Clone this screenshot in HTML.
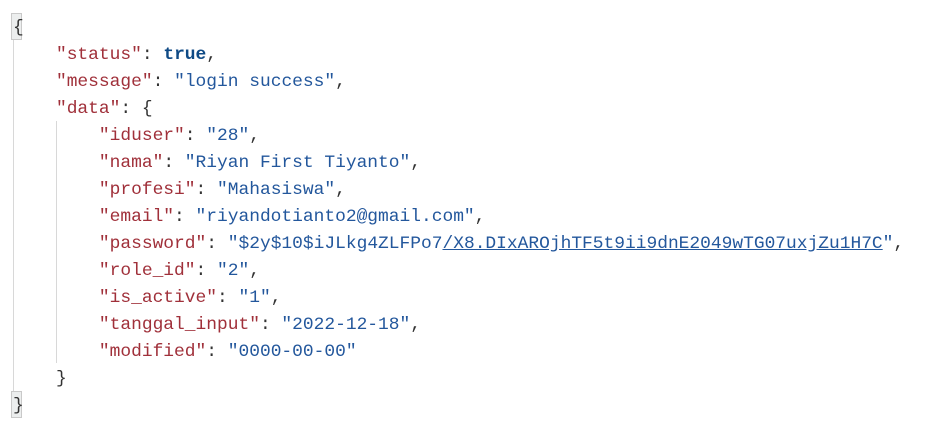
<!DOCTYPE html>
<html><head><style>
html,body{margin:0;padding:0;background:#fff;width:942px;height:436px;overflow:hidden}
.c{position:absolute;left:13px;top:15px;font-family:"Liberation Mono",monospace;font-size:17.9px;line-height:27px;color:#333;white-space:pre}
.k{color:#a0303a}
.s{color:#23579c}
.b{color:#0f4a85;font-weight:bold}
.u{text-decoration:underline}
.g{position:absolute;width:1px;background:#d8d8d8}
.hb{position:absolute;background:#eceeee;border:1px solid #c9c9c9;width:9px;height:25px}
</style></head><body>
<div class="hb" style="left:11px;top:13px"></div>
<div class="hb" style="left:11px;top:391px"></div>
<div class="g" style="left:13px;top:40px;height:351px"></div>
<div class="g" style="left:56px;top:121px;height:242px"></div>
<div class="c">{
    <span class="k">"status"</span>: <span class="b">true</span>,
    <span class="k">"message"</span>: <span class="s">"login success"</span>,
    <span class="k">"data"</span>: {
        <span class="k">"iduser"</span>: <span class="s">"28"</span>,
        <span class="k">"nama"</span>: <span class="s">"Riyan First Tiyanto"</span>,
        <span class="k">"profesi"</span>: <span class="s">"Mahasiswa"</span>,
        <span class="k">"email"</span>: <span class="s">"riyandotianto2@gmail.com"</span>,
        <span class="k">"password"</span>: <span class="s">"$2y$10$iJLkg4ZLFPo7<span class="u">/X8.DIxAROjhTF5t9ii9dnE2049wTG07uxjZu1H7C</span>"</span>,
        <span class="k">"role_id"</span>: <span class="s">"2"</span>,
        <span class="k">"is_active"</span>: <span class="s">"1"</span>,
        <span class="k">"tanggal_input"</span>: <span class="s">"2022-12-18"</span>,
        <span class="k">"modified"</span>: <span class="s">"0000-00-00"</span>
    }
}</div>
</body></html>
